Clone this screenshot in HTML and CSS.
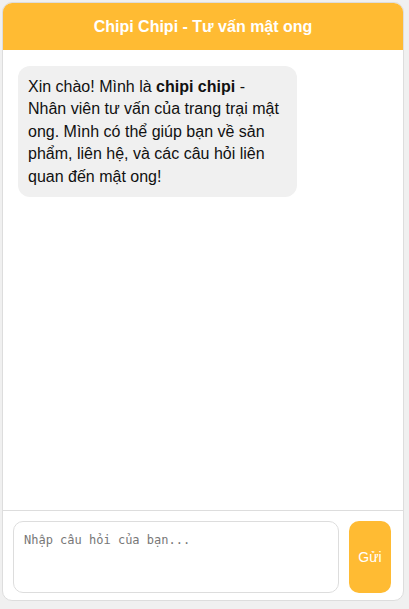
FILE: index.html
```html
<!DOCTYPE html>
<html lang="vi">
<head>
<meta charset="utf-8">
<title>Chipi Chipi - Tư vấn mật ong</title>
<link rel="stylesheet" href="styles.css">
</head>
<body>
<div class="chat">
  <div class="chat-header">Chipi Chipi - Tư vấn mật ong</div>
  <div class="chat-messages">
    <div class="msg bot">Xin chào! Mình là <b>chipi chipi</b> - Nhân viên tư vấn của trang trại mật ong. Mình có thể giúp bạn về sản phẩm, liên hệ, và các câu hỏi liên quan đến mật ong!</div>
  </div>
  <div class="chat-input">
    <textarea class="input-box" placeholder="Nhập câu hỏi của bạn..."></textarea>
    <button class="send-btn">Gửi</button>
  </div>
</div>
</body>
</html>
```

FILE: styles.css
```css
html, body {
  margin: 0;
  padding: 0;
  background: #f0f0f0;
  font-family: "Liberation Sans", Arial, sans-serif;
}
body {
  padding: 2px 0 0 2px;
}
.chat {
  width: 400px;
  height: 597px;
  background: #fff;
  border: 1px solid #ddd;
  border-radius: 10px;
  display: flex;
  flex-direction: column;
  overflow: hidden;
}
.chat-header {
  background: #ffbb33;
  color: #fff;
  font-weight: bold;
  font-size: 16px;
  text-align: center;
  height: 47px;
  line-height: 47px;
  flex: none;
}
.chat-messages {
  flex: 1;
  padding: 16px 15px;
}
.msg {
  font-size: 16px;
  line-height: 22.4px;
  color: #111;
}
.msg.bot {
  background: #f0f0f0;
  border-radius: 12px;
  padding: 10px 10px 9px 10px;
  max-width: 279px;
  box-sizing: border-box;
}
.chat-input {
  flex: none;
  border-top: 1px solid #ddd;
  padding: 10px 12px 7px 10px;
  display: flex;
  gap: 10px;
}
.input-box {
  flex: 1;
  height: 72px;
  box-sizing: border-box;
  border: 1px solid #ddd;
  border-radius: 10px;
  padding: 11px 10px;
  font-family: "DejaVu Sans Mono", monospace;
  font-size: 12px;
  resize: none;
  outline: none;
  margin: 0;
}
.input-box::placeholder {
  color: #777;
}
.send-btn {
  flex: none;
  width: 42px;
  height: 72px;
  border: none;
  border-radius: 10px;
  background: #ffbb33;
  color: #fff;
  font-family: "Liberation Sans", Arial, sans-serif;
  font-size: 14px;
  padding: 0;
}
```
